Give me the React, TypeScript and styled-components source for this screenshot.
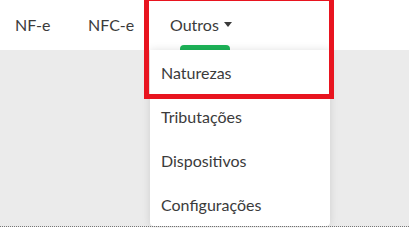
import React from "react";
import styled, { createGlobalStyle } from "styled-components";

const Global = createGlobalStyle`
  html, body { margin: 0; padding: 0; background: #fff; }
  body { font-family: Lato, "Open Sans", sans-serif; overflow: hidden; }
`;

const Page = styled.div`
  width: 409px;
  height: 228px;
  position: relative;
  overflow: hidden;
`;

const Header = styled.header`
  height: 50px;
  background: #fff;
  display: flex;
  align-items: stretch;
  padding-left: 15px;
  position: relative;
  z-index: 2;
`;

const NavItem = styled.div<{ $width?: number; $dropdown?: boolean }>`
  position: relative;
  display: flex;
  align-items: center;
  gap: 5px;
  width: ${(p) => (p.$width ? `${p.$width}px` : "auto")};
  font-size: 16px;
  color: #3b3b3b;
  padding: ${(p) => (p.$dropdown ? "0 20px 2px" : "0 0 2px")};
`;

const Caret = styled.span`
  width: 0;
  height: 0;
  border-left: 4px solid transparent;
  border-right: 4px solid transparent;
  border-top: 5px solid #3b3b3b;
  margin-top: 1px;
`;

const ActiveBar = styled.span`
  position: absolute;
  left: 30px;
  bottom: 0;
  width: 50px;
  height: 5px;
  background: #1db458;
  border-radius: 4px 4px 0 0;
`;

const Menu = styled.ul`
  position: absolute;
  top: 50px;
  left: 0;
  width: 180px;
  margin: 0;
  padding: 0;
  list-style: none;
  background: #fff;
  border-radius: 0 0 4px 4px;
  box-shadow: 0 0 8px rgba(0, 0, 0, 0.12);
`;

const MenuItem = styled.li`
  height: 44px;
  display: flex;
  align-items: center;
  padding-left: 11px;
  font-size: 16px;
  color: #3b3b3b;
`;

const Main = styled.main`
  height: 176px;
  background: #ebebeb;
  border-bottom: 1px dotted #777;
`;

const Highlight = styled.div`
  position: absolute;
  left: 144px;
  top: -4px;
  width: 190px;
  height: 103px;
  box-sizing: border-box;
  border: 5px solid #e8141f;
  z-index: 5;
  pointer-events: none;
`;

export default function App() {
  return (
    <Page>
      <Global />
      <Header>
        <NavItem $width={73}>NF-e</NavItem>
        <NavItem $width={62}>NFC-e</NavItem>
        <NavItem $dropdown>
          Outros
          <Caret />
          <ActiveBar />
          <Menu>
            <MenuItem>Naturezas</MenuItem>
            <MenuItem>Tributações</MenuItem>
            <MenuItem>Dispositivos</MenuItem>
            <MenuItem>Configurações</MenuItem>
          </Menu>
        </NavItem>
      </Header>
      <Main />
      <Highlight />
    </Page>
  );
}
